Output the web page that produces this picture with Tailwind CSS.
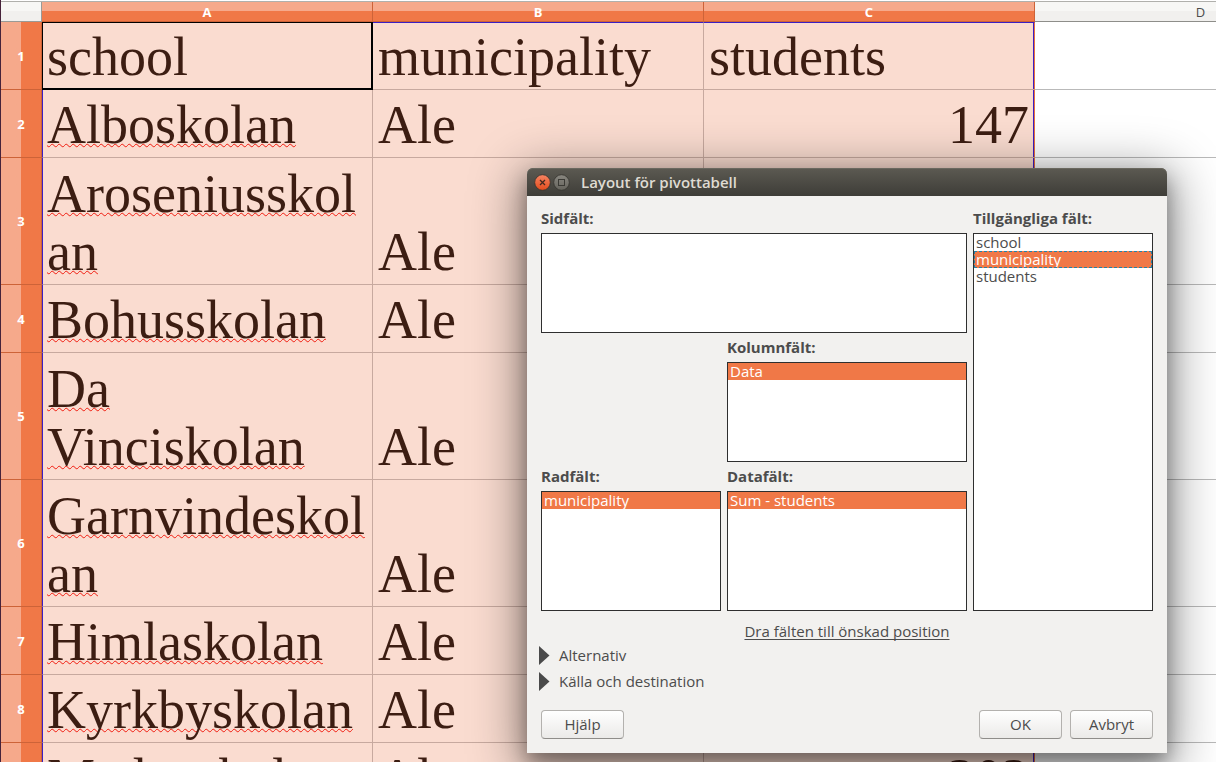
<!DOCTYPE html>
<html lang="sv">
<head>
<meta charset="utf-8">
<title>Layout för pivottabell</title>
<script src="https://cdn.jsdelivr.net/npm/@tailwindcss/browser@4"></script>
</head>
<body class="relative h-screen overflow-hidden border-l border-[#46223a] bg-white font-['Open_Sans',sans-serif] text-[15px] text-[#4c4c4c]">

<main class="h-full overflow-hidden">
<table class="mt-px w-[1365px] table-fixed border-separate border-spacing-0 border-t border-[#b0b0ac] text-left">
  <colgroup><col class="w-[41px]"><col class="w-[331px]"><col class="w-[331px]"><col class="w-[331px]"><col></colgroup>
  <thead class="text-center text-[13px] leading-[17px] text-white">
    <tr class="h-5">
      <td class="border-r border-b border-[#9a9a96] bg-linear-to-b from-[#f7f7f5] from-50% to-[#f1f0ee] to-50% p-0"></td>
      <th scope="col" class="border-r border-b border-[#cd6338] bg-linear-to-b from-[#f6a98b] from-50% to-[#f07847] to-50% p-0 pt-[2px] font-bold">A</th>
      <th scope="col" class="border-r border-b border-[#cd6338] bg-linear-to-b from-[#f6a98b] from-50% to-[#f07847] to-50% p-0 pt-[2px] font-bold">B</th>
      <th scope="col" class="border-r border-b border-[#cd6338] bg-linear-to-b from-[#f6a98b] from-50% to-[#f07847] to-50% p-0 pt-[2px] font-bold">C</th>
      <th scope="col" class="border-b border-[#8e8e8a] bg-linear-to-b from-[#f7f7f5] from-50% to-[#f1f0ee] to-50% p-0 pt-[2px] font-normal text-[#4c4c4c]">D</th>
    </tr>
  </thead>
  <tbody id="rows" class="font-['Liberation_Serif',serif] text-[54px] leading-[58px] text-[#3c1d12]"></tbody>
</table>
</main>

<template id="row">
  <tr>
    <th scope="row" class="border-r border-b border-[#cd6338] bg-linear-to-r from-[#f6a98b] from-50% to-[#f07847] to-50% p-0 pt-px text-center align-middle font-['Open_Sans',sans-serif] text-[13px] leading-[17px] font-bold text-white"></th>
    <td class="border-r border-b border-l border-[#c7a99f] border-l-[#3b1fc4] bg-[#fadcd0] pt-[5px] pr-[5px] pb-[3px] pl-[4px] align-bottom wrap-break-word"><span class="underline decoration-[#f01c10] decoration-wavy decoration-1 underline-offset-0 [text-decoration-skip-ink:none]"></span></td>
    <td class="border-r border-b border-[#c7a99f] bg-[#fadcd0] pt-[5px] pr-[5px] pb-[3px] pl-[5px] align-bottom"></td>
    <td class="border-r border-b border-[#c7a99f] border-r-[#e8703f] bg-[#fadcd0] pt-[5px] pr-[5px] pb-[3px] pl-[5px] text-right align-bottom shadow-[inset_-1px_0_0_#3b1fc4]"></td>
    <td class="border-b border-[#b9b9b9]"></td>
  </tr>
</template>

<template id="head-row">
  <tr class="h-[68px]">
    <th scope="row" class="border-r border-b border-[#cd6338] bg-linear-to-r from-[#f6a98b] from-50% to-[#f07847] to-50% p-0 pt-px text-center align-middle font-['Open_Sans',sans-serif] text-[13px] leading-[17px] font-bold text-white">1</th>
    <td class="border-t border-r-2 border-b-2 border-l border-black bg-[#fadcd0] pt-[5px] pr-0 pb-[2px] pl-[4px] align-top">school</td>
    <td class="border-t border-r border-b border-[#c7a99f] border-t-[#3b1fc4] bg-[#fadcd0] pt-[5px] pr-0 pb-[2px] pl-[5px] align-top">municipality</td>
    <td class="border-t border-r border-b border-[#c7a99f] border-t-[#3b1fc4] border-r-[#e8703f] bg-[#fadcd0] pt-[5px] pr-0 pb-[2px] pl-[5px] align-top shadow-[inset_-1px_0_0_#3b1fc4]">students</td>
    <td class="border-b border-[#b9b9b9]"></td>
  </tr>
</template>

<section role="dialog" aria-labelledby="dialog-title" class="absolute top-[168px] left-[526px] w-[640px] rounded-t-md bg-[#f2f1ef] shadow-[0_10px_20px_rgba(0,0,0,0.35),0_10px_50px_8px_rgba(0,0,0,0.4)]">
  <header class="flex h-7 items-center rounded-t-md bg-linear-to-b from-[#5c5a52] to-[#3e3d38] pl-[7px] shadow-[inset_0_1px_0_#6a685f]">
    <button aria-label="Stäng" class="h-[17px] w-[17px]">
      <svg viewBox="0 0 17 17" class="block h-full w-full"><defs><linearGradient id="g1" x2="0" y2="1"><stop stop-color="#f68463"/><stop offset="1" stop-color="#e24c1c"/></linearGradient></defs><circle cx="8.5" cy="8.5" r="7.8" fill="url(#g1)" stroke="#35332e" stroke-width=".8"/><path d="M6 6l5 5M11 6l-5 5" stroke="#43291f" stroke-width="1.3"/></svg>
    </button>
    <button aria-label="Maximera" class="ml-[2px] h-[17px] w-[17px]">
      <svg viewBox="0 0 17 17" class="block h-full w-full"><defs><linearGradient id="g2" x2="0" y2="1"><stop stop-color="#898780"/><stop offset="1" stop-color="#65635c"/></linearGradient></defs><circle cx="8.5" cy="8.5" r="7.8" fill="url(#g2)" stroke="#35332e" stroke-width=".8"/><rect x="5.5" y="5.5" width="6" height="6" fill="none" stroke="#3b3a35"/></svg>
    </button>
    <h1 id="dialog-title" class="ml-[11px] font-semibold text-[#dfdbd2]">Layout för pivottabell</h1>
  </header>

  <div class="px-[14px] pt-3 pb-[14px]">
    <div class="grid grid-cols-[180fr_240fr_180fr] gap-x-[6px] gap-y-1">
      <div class="col-span-2 flex flex-col">
        <h2 id="l1" class="mb-[5px] leading-5 font-bold">Sidfält:</h2>
        <ul role="listbox" aria-labelledby="l1" class="h-[100px] border border-[#2f2f2f] bg-white"></ul>
      </div>
      <div class="col-start-3 row-span-3 row-start-1 flex flex-col">
        <h2 id="l2" class="mb-[5px] leading-5 font-bold">Tillgängliga fält:</h2>
        <ul role="listbox" aria-labelledby="l2" class="grow border border-[#2f2f2f] bg-white leading-[17px]">
          <li role="option" class="px-[2px]">school</li>
          <li role="option" aria-selected="true" class="bg-[#f07847] px-[2px] text-white outline-1 -outline-offset-1 outline-[#2482a8] outline-dashed">municipality</li>
          <li role="option" class="px-[2px]">students</li>
        </ul>
      </div>
      <div class="col-start-2 flex flex-col">
        <h2 id="l3" class="mb-[5px] leading-5 font-bold">Kolumnfält:</h2>
        <ul role="listbox" aria-labelledby="l3" class="h-[100px] border border-[#2f2f2f] bg-white leading-[17px]">
          <li role="option" aria-selected="true" class="bg-[#f07847] px-[2px] text-white">Data</li>
        </ul>
      </div>
      <div class="col-start-1 flex flex-col">
        <h2 id="l4" class="mb-[5px] leading-5 font-bold">Radfält:</h2>
        <ul role="listbox" aria-labelledby="l4" class="h-[120px] border border-[#2f2f2f] bg-white leading-[17px]">
          <li role="option" aria-selected="true" class="bg-[#f07847] px-[2px] text-white">municipality</li>
        </ul>
      </div>
      <div class="flex flex-col">
        <h2 id="l5" class="mb-[5px] leading-5 font-bold">Datafält:</h2>
        <ul role="listbox" aria-labelledby="l5" class="h-[120px] border border-[#2f2f2f] bg-white leading-[17px]">
          <li role="option" aria-selected="true" class="bg-[#f07847] px-[2px] text-white">Sum - students</li>
        </ul>
      </div>
    </div>

    <p class="mt-[10px] text-center leading-5"><a href="#" class="underline underline-offset-2 [text-decoration-skip-ink:none]">Dra fälten till önskad position</a></p>

    <div class="-ml-[2px] flex flex-col items-start">
      <button aria-expanded="false" class="flex h-[26px] items-center gap-[9px] pt-[2px]"><svg viewBox="0 0 11 19" class="h-[19px] w-[11px] fill-[#4a4a4a]"><path d="M0 0L10.500 9.500L0 19z"/></svg>Alternativ</button>
      <button aria-expanded="false" class="flex h-[26px] items-center gap-[9px] pt-[2px]"><svg viewBox="0 0 11 19" class="h-[19px] w-[11px] fill-[#4a4a4a]"><path d="M0 0L10.500 9.500L0 19z"/></svg>Källa och destination</button>
    </div>

    <div class="mt-[17px] flex gap-2">
      <button class="mr-auto h-[29px] w-[83px] rounded-[4px] border border-[#b3b1ae] border-b-[#8f8d8a] bg-linear-to-b from-white to-[#ebeae8]">Hjälp</button>
      <button class="h-[29px] w-[83px] rounded-[4px] border border-[#b3b1ae] border-b-[#8f8d8a] bg-linear-to-b from-white to-[#ebeae8]">OK</button>
      <button class="h-[29px] w-[83px] rounded-[4px] border border-[#b3b1ae] border-b-[#8f8d8a] bg-linear-to-b from-white to-[#ebeae8]">Avbryt</button>
    </div>
  </div>
</section>

<script>
  const data = [
    ['Alboskolan', 'Ale', 147],
    ['Aroseniusskolan', 'Ale', ''],
    ['Bohusskolan', 'Ale', ''],
    ['Da Vinciskolan', 'Ale', ''],
    ['Garnvindeskolan', 'Ale', ''],
    ['Himlaskolan', 'Ale', ''],
    ['Kyrkbyskolan', 'Ale', ''],
    ['Madenskolan', 'Ale', 203],
  ];
  const body = document.getElementById('rows');
  body.append(document.getElementById('head-row').content.cloneNode(true));
  data.forEach(([school, municipality, students], i) => {
    const tr = document.getElementById('row').content.cloneNode(true).firstElementChild;
    tr.className = school.length > 12 ? 'h-[127px]' : 'h-[68px]';
    tr.cells[0].textContent = i + 2;
    tr.querySelector('span').textContent = school;
    tr.cells[2].textContent = municipality;
    tr.cells[3].textContent = students;
    body.append(tr);
  });
</script>
</body>
</html>
